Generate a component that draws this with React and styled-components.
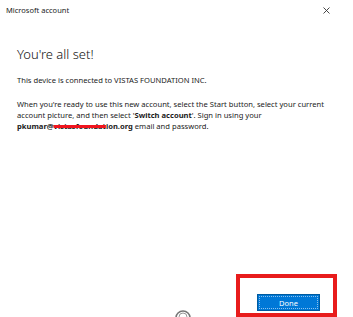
import styled, { createGlobalStyle } from "styled-components";

const GlobalStyle = createGlobalStyle`
  html, body {
    margin: 0;
    padding: 0;
    background: #fff;
  }
  body {
    font-family: "Noto Sans", "Open Sans", sans-serif;
  }
`;

const Window = styled.div`
  position: relative;
  width: 353px;
  height: 317px;
  overflow: hidden;
  background: #fff;
  display: flex;
  flex-direction: column;
  color: #1b1b1b;
`;

const TitleBar = styled.div`
  height: 20px;
  display: flex;
  align-items: center;
  justify-content: space-between;
  padding: 0 22px 0 6px;
`;

const Title = styled.span`
  font-size: 7.5px;
  color: #222;
`;

const Close = styled.button`
  border: 0;
  background: transparent;
  padding: 0;
  width: 10px;
  height: 10px;
  display: flex;
  align-items: center;
  justify-content: center;
  cursor: pointer;
`;

const Body = styled.div`
  flex: 1;
  display: flex;
  flex-direction: column;
  padding: 26px 18px 0 17px;
`;

const Heading = styled.h1`
  margin: 0;
  font-size: 13px;
  font-weight: 300;
  line-height: 17px;
  color: #111;
`;

const Text = styled.p`
  margin: ${(p) => p.$top}px 0 0 0;
  font-size: 7.6px;
  line-height: 11px;
  color: #1b1b1b;
`;

const Strong = styled.b`
  font-weight: 700;
`;

const Redacted = styled.span`
  text-decoration: line-through;
  text-decoration-color: #f0141e;
  text-decoration-thickness: 3px;
`;

const Footer = styled.div`
  margin-top: auto;
  display: flex;
  justify-content: flex-end;
  padding: 0 33px 6px 0;
`;

const DoneButton = styled.button`
  flex: 0 0 63px;
  width: 63px;
  height: 17px;
  box-sizing: border-box;
  border: 1px solid #005a9e;
  background: #0078d7;
  color: #fff;
  font-family: inherit;
  font-size: 7.5px;
  padding: 0;
  outline: 1px dotted rgba(255, 255, 255, 0.55);
  outline-offset: -3px;
  cursor: pointer;
`;

const Spinner = styled.svg`
  position: absolute;
  left: 174px;
  top: 309px;
`;

const Annotation = styled.div`
  position: absolute;
  left: 236px;
  top: 274px;
  width: 101px;
  height: 43px;
  box-sizing: border-box;
  border: 4px solid #e81c1c;
  pointer-events: none;
`;

export default function App() {
  return (
    <>
      <GlobalStyle />
      <Window>
        <TitleBar>
          <Title>Microsoft account</Title>
          <Close aria-label="Close">
            <svg width="7" height="7" viewBox="0 0 7 7">
              <path d="M0.5 0.5L6.5 6.5M6.5 0.5L0.5 6.5" stroke="#333" strokeWidth="0.9" />
            </svg>
          </Close>
        </TitleBar>
        <Body>
          <Heading>You're all set!</Heading>
          <Text $top={12}>This device is connected to VISTAS FOUNDATION INC.</Text>
          <Text $top={13}>
            When you're ready to use this new account, select the Start button, select your current
            account picture, and then select '<Strong>Switch account</Strong>'. Sign in using your{" "}
            <Strong>
              pkumar@<Redacted>vistasfoundat</Redacted>ion.org
            </Strong>{" "}
            email and password.
          </Text>
        </Body>
        <Footer>
          <DoneButton>Done</DoneButton>
        </Footer>
        <Spinner width="18" height="18" viewBox="0 0 18 18">
          <path d="M2 9 A7 7 0 0 1 16 9" fill="none" stroke="#777" strokeWidth="1.6" />
          <path d="M5 8 A4 4 0 0 1 13 8" fill="none" stroke="#999" strokeWidth="1" />
        </Spinner>
        <Annotation />
      </Window>
    </>
  );
}
